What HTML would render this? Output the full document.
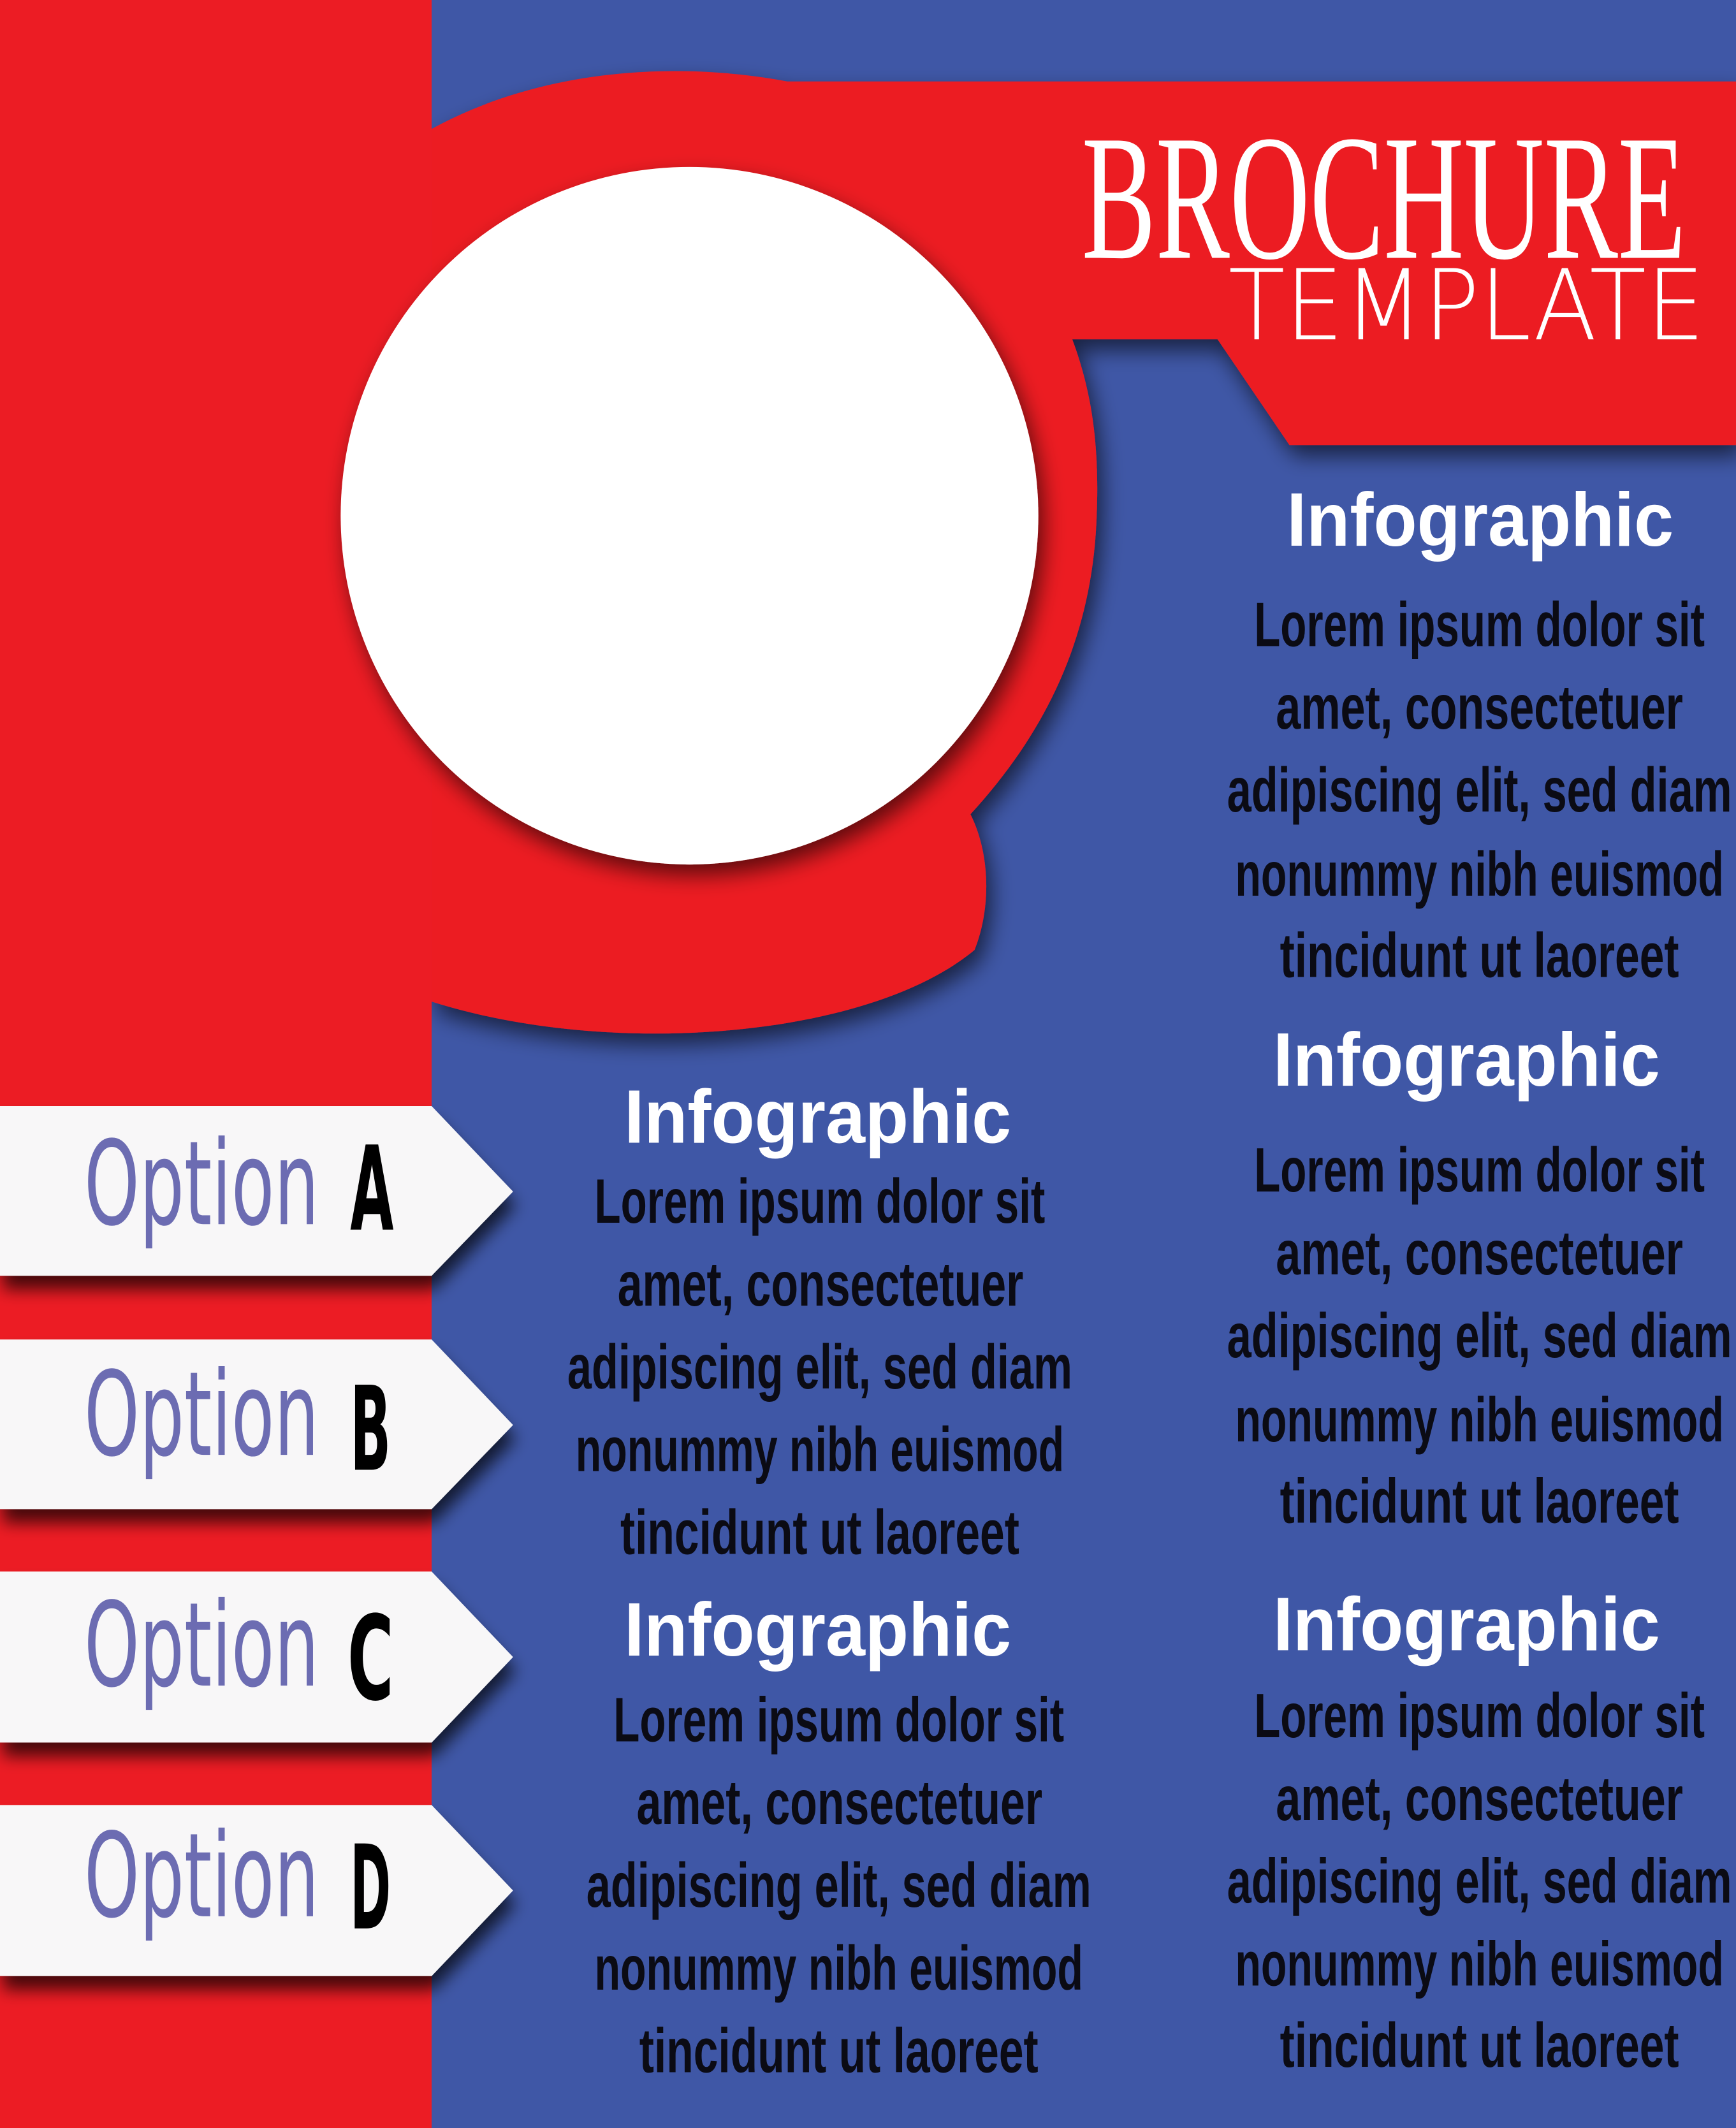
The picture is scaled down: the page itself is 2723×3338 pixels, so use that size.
<!DOCTYPE html>
<html><head><meta charset="utf-8"><style>
html,body{margin:0;padding:0;background:#3f57a6;}
svg{display:block}
.h{font-family:"Liberation Sans",sans-serif;font-weight:bold;fill:#fff;font-size:56px}
.b{font-family:"Liberation Sans Narrow","Liberation Sans",sans-serif;font-weight:bold;fill:#0b0b14;font-size:46px}
.o{font-family:"DejaVu Sans Condensed","Liberation Sans",sans-serif;fill:#6c6cb2;font-size:86px}
.l{font-family:"DejaVu Sans Condensed","Liberation Sans",sans-serif;font-weight:bold;fill:#000;font-size:86px}
</style></head><body>
<svg width="2723" height="3338" viewBox="0 0 1279 1568" preserveAspectRatio="none" xmlns="http://www.w3.org/2000/svg">
<defs>
<filter id="sh" x="-20%" y="-20%" width="140%" height="140%"><feGaussianBlur in="SourceAlpha" stdDeviation="8"/><feOffset dx="4" dy="8"/><feComponentTransfer><feFuncA type="linear" slope="0.6"/></feComponentTransfer><feMerge><feMergeNode/><feMergeNode in="SourceGraphic"/></feMerge></filter>
<filter id="sh2" x="-20%" y="-20%" width="140%" height="160%"><feGaussianBlur in="SourceAlpha" stdDeviation="6"/><feOffset dx="2" dy="10"/><feComponentTransfer><feFuncA type="linear" slope="0.7"/></feComponentTransfer><feMerge><feMergeNode/><feMergeNode in="SourceGraphic"/></feMerge></filter>
</defs>
<rect width="1279" height="1568" fill="#3f57a6"/>
<path filter="url(#sh)" fill="#ec1c24" d="M318,95 C400,50 500,45 580,60 L1279,60 L1279,328 L950,328 L897,250 L790,250 C805,290 810,330 808,380 C805,470 770,540 715,600 C730,630 730,670 718,700 C640,765 450,780 318,738 Z"/>
<rect x="0" y="0" width="318" height="1568" fill="#ec1c24"/>
<circle cx="508" cy="380" r="257" fill="#fff" filter="url(#sh)"/>
<text x="797" y="190" font-family="'Liberation Serif',serif" font-size="132" fill="#fff" textLength="445" lengthAdjust="spacingAndGlyphs">BROCHURE</text>
<text x="905" y="250" font-family="'DejaVu Sans',sans-serif" font-weight="200" font-size="72" fill="#fff" textLength="351" lengthAdjust="spacingAndGlyphs">TEMPLATE</text>
<g filter="url(#sh2)" fill="#f8f7f8">
<path d="M0,815 L318,815 L378,878 L318,940 L0,940Z"/>
<path d="M0,987 L318,987 L378,1050 L318,1112 L0,1112Z"/>
<path d="M0,1158 L318,1158 L378,1221 L318,1284 L0,1284Z"/>
<path d="M0,1330 L318,1330 L378,1393 L318,1456 L0,1456Z"/>
</g>
<text class="o" x="62" y="902" textLength="173" lengthAdjust="spacingAndGlyphs">Option</text><text class="l" x="258" y="906" textLength="32" lengthAdjust="spacingAndGlyphs">A</text>
<text class="o" x="62" y="1072" textLength="173" lengthAdjust="spacingAndGlyphs">Option</text><text class="l" x="258" y="1083" textLength="30" lengthAdjust="spacingAndGlyphs">B</text>
<text class="o" x="62" y="1242" textLength="173" lengthAdjust="spacingAndGlyphs">Option</text><text class="l" x="256" y="1252" textLength="34" lengthAdjust="spacingAndGlyphs">C</text>
<text class="o" x="62" y="1412" textLength="173" lengthAdjust="spacingAndGlyphs">Option</text><text class="l" x="258" y="1421" textLength="30" lengthAdjust="spacingAndGlyphs">D</text>

<text class="h" x="948" y="402" textLength="285" lengthAdjust="spacingAndGlyphs">Infographic</text>
<text class="b" x="924" y="476" textLength="332" lengthAdjust="spacingAndGlyphs">Lorem ipsum dolor sit</text>
<text class="b" x="940" y="537" textLength="300" lengthAdjust="spacingAndGlyphs">amet, consectetuer</text>
<text class="b" x="904" y="598" textLength="372" lengthAdjust="spacingAndGlyphs">adipiscing elit, sed diam</text>
<text class="b" x="910" y="660" textLength="360" lengthAdjust="spacingAndGlyphs">nonummy nibh euismod</text>
<text class="b" x="943" y="720" textLength="294" lengthAdjust="spacingAndGlyphs">tincidunt ut laoreet</text>

<text class="h" x="938" y="800" textLength="285" lengthAdjust="spacingAndGlyphs">Infographic</text>
<text class="b" x="924" y="878" textLength="332" lengthAdjust="spacingAndGlyphs">Lorem ipsum dolor sit</text>
<text class="b" x="940" y="939" textLength="300" lengthAdjust="spacingAndGlyphs">amet, consectetuer</text>
<text class="b" x="904" y="1000" textLength="372" lengthAdjust="spacingAndGlyphs">adipiscing elit, sed diam</text>
<text class="b" x="910" y="1062" textLength="360" lengthAdjust="spacingAndGlyphs">nonummy nibh euismod</text>
<text class="b" x="943" y="1122" textLength="294" lengthAdjust="spacingAndGlyphs">tincidunt ut laoreet</text>

<text class="h" x="938" y="1216" textLength="285" lengthAdjust="spacingAndGlyphs">Infographic</text>
<text class="b" x="924" y="1280" textLength="332" lengthAdjust="spacingAndGlyphs">Lorem ipsum dolor sit</text>
<text class="b" x="940" y="1341" textLength="300" lengthAdjust="spacingAndGlyphs">amet, consectetuer</text>
<text class="b" x="904" y="1402" textLength="372" lengthAdjust="spacingAndGlyphs">adipiscing elit, sed diam</text>
<text class="b" x="910" y="1463" textLength="360" lengthAdjust="spacingAndGlyphs">nonummy nibh euismod</text>
<text class="b" x="943" y="1523" textLength="294" lengthAdjust="spacingAndGlyphs">tincidunt ut laoreet</text>

<text class="h" x="460" y="842" textLength="285" lengthAdjust="spacingAndGlyphs">Infographic</text>
<text class="b" x="438" y="901" textLength="332" lengthAdjust="spacingAndGlyphs">Lorem ipsum dolor sit</text>
<text class="b" x="455" y="962" textLength="299" lengthAdjust="spacingAndGlyphs">amet, consectetuer</text>
<text class="b" x="418" y="1023" textLength="372" lengthAdjust="spacingAndGlyphs">adipiscing elit, sed diam</text>
<text class="b" x="424" y="1084" textLength="360" lengthAdjust="spacingAndGlyphs">nonummy nibh euismod</text>
<text class="b" x="457" y="1145" textLength="294" lengthAdjust="spacingAndGlyphs">tincidunt ut laoreet</text>

<text class="h" x="460" y="1220" textLength="285" lengthAdjust="spacingAndGlyphs">Infographic</text>
<text class="b" x="452" y="1283" textLength="332" lengthAdjust="spacingAndGlyphs">Lorem ipsum dolor sit</text>
<text class="b" x="469" y="1344" textLength="299" lengthAdjust="spacingAndGlyphs">amet, consectetuer</text>
<text class="b" x="432" y="1405" textLength="372" lengthAdjust="spacingAndGlyphs">adipiscing elit, sed diam</text>
<text class="b" x="438" y="1466" textLength="360" lengthAdjust="spacingAndGlyphs">nonummy nibh euismod</text>
<text class="b" x="471" y="1527" textLength="294" lengthAdjust="spacingAndGlyphs">tincidunt ut laoreet</text>
</svg>
</body></html>
